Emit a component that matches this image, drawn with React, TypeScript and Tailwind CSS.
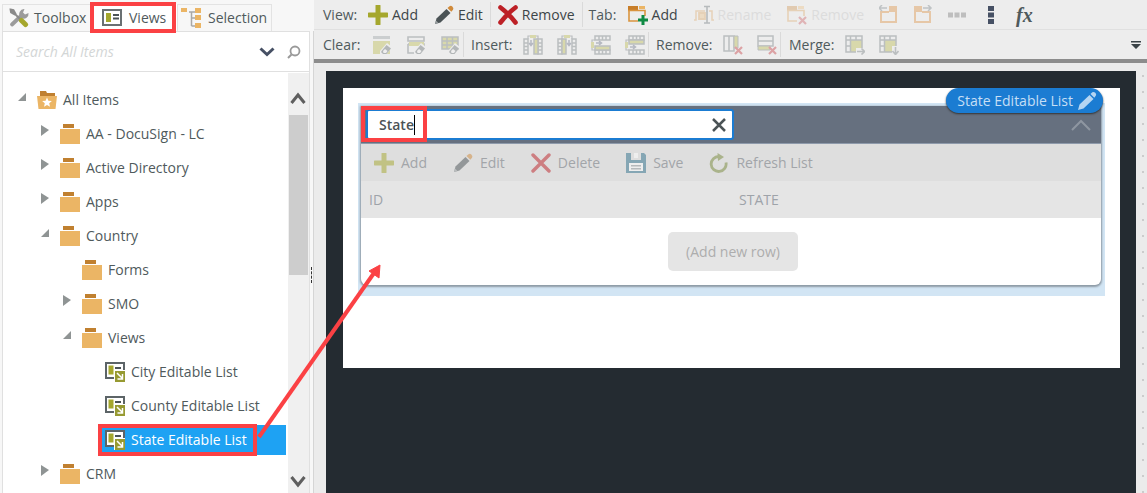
import { useState } from "react";
import type { ReactNode } from "react";
import clsx from "clsx";

function Svg({ children, size = 20 }: { children: ReactNode; size?: number }) {
  return (
    <svg width={size} height={size} viewBox="0 0 20 20" fill="none" className="shrink-0" aria-hidden="true">
      {children}
    </svg>
  );
}

/* ---------- icons ---------- */

const ToolboxIcon = () => (
  <Svg>
    <path d="M3 16.500 13 7" stroke="#9b9b9b" strokeWidth="3.800" strokeLinecap="round" />
    <path d="M11.500 9a4.800 4.800 0 0 1 4-8l-1.500 3.500 2 2 3.500-1.500a4.800 4.800 0 0 1-7 5z" fill="#9b9b9b" />
    <path d="m1.500 1.500 3 .5 2 3.500-1 1-3.500-2zM5 5l6 6" fill="#8a8a8a" stroke="#8a8a8a" strokeWidth="1.800" />
    <path d="m12.500 12.500 4 4" stroke="#a5a72d" strokeWidth="5" strokeLinecap="round" />
  </Svg>
);

const ViewsIcon = () => (
  <Svg>
    <path d="M1 2h18v15H1z" stroke="#6a7073" strokeWidth="2" fill="#fff" />
    <path d="M4 5h5v9H4z" fill="#a5a72d" />
    <path d="M11 6h6v2h-6zM11 9.500h6v2h-6z" fill="#4b5356" />
  </Svg>
);

const SelectionIcon = () => (
  <Svg>
    <path d="M10.500 4v14M8 4h6M10.500 10H14M10.500 18H14" stroke="#a8a8a8" strokeWidth="1.500" />
    <path d="M0 0h6v4H0zM14 0h6v5h-6zM14 7h6v5h-6zM14 15h6v5h-6z" fill="#ebb565" />
  </Svg>
);

const FolderIcon = () => (
  <Svg>
    <path d="M3 0h11v4H3z" fill="#c08030" />
    <path d="M0 5h20v15H0z" fill="#ebb565" />
  </Svg>
);

const RootFolderIcon = () => (
  <Svg>
    <path d="M3 1h6l1 2h8v4H3z" fill="#c08030" />
    <path d="M0 6h20l-1.500 13h-17z" fill="#ebb565" />
    <path d="m10 7.500 1.400 3.200 3.500.3-2.700 2.300.8 3.400-3-1.800-3 1.800.8-3.400L5.100 11l3.500-.3z" fill="#fff" />
  </Svg>
);

const ListViewIcon = () => (
  <Svg>
    <path d="M1 1h18v15H1z" stroke="#5c6467" strokeWidth="2" fill="#fff" />
    <path d="M3.500 3.500h5v9h-5z" fill="#a5a72d" />
    <path d="M10 5h6v2h-6z" fill="#4b5356" />
    <path d="M9 8h11v12H9z" fill="#fff" />
    <path d="M10 9h10v11H10z" fill="#979a32" />
    <path d="m12 11 5 5M17.500 12v5H12.500" stroke="#fff" strokeWidth="1.500" />
  </Svg>
);

const PlusIcon = () => (
  <Svg>
    <path d="M10 1v18M1 10h18" stroke="#a5a72d" strokeWidth="5" strokeLinecap="round" />
  </Svg>
);

const PencilIcon = () => (
  <Svg>
    <path d="m1 19 1.500-5.500L12.500 4l4 4L6.500 17.500z" fill="#4b5356" />
    <path d="m13.500 3 2-1.800q1.500-1 3 .5t.5 3L17.300 6.700z" fill="#d08a3a" />
    <path d="m1 19 1-3.500 2.500 2.500z" fill="#9aa0a2" />
  </Svg>
);

const CrossIcon = ({ thin = false }: { thin?: boolean }) => (
  <Svg>
    <path
      d={thin ? "M2 2l16 16M18 2 2 18" : "M2.500 2.500q8 6 15 15M17.500 2.500q-8 6-15 15"}
      stroke="#bd2026"
      strokeWidth={thin ? 3.4 : 4.6}
      strokeLinecap="round"
    />
  </Svg>
);

const SaveIcon = () => (
  <Svg>
    <path d="M0 0h18l2 2v18H0z" fill="#2f6f8c" />
    <path d="M5 0h10v7H5z" fill="#dedede" />
    <path d="M8 0h4v5H8z" fill="#fff" />
    <path d="M3 10h14v8H3z" fill="#fff" />
    <path d="M5 12h10v1.500H5zM5 15h10v1.500H5z" fill="#8d9599" />
  </Svg>
);

const RefreshIcon = () => (
  <Svg>
    <path d="M17 9.500a7.500 7.500 0 1 1-7-6" stroke="#77893a" strokeWidth="2.800" />
    <path d="m8.500 0 6.500 4-6 4z" fill="#77893a" />
  </Svg>
);

const TabBase = () => (
  <>
    <path d="M0 1h10v5H0z" fill="#c77d28" />
    <path d="M11 1h6v3h-6z" fill="#ebb565" />
    <path d="M1 5v11h9M0 5.500h17V11" stroke="#d9943f" strokeWidth="1.600" />
  </>
);

const TabAddIcon = () => (
  <Svg>
    <TabBase />
    <path d="M15 10v10M10 15h10" stroke="#0f8a43" strokeWidth="3" />
  </Svg>
);

const TabRemoveIcon = () => (
  <Svg>
    <TabBase />
    <path d="m12 12 7 7M19 12l-7 7" stroke="#c5343a" strokeWidth="2.200" />
  </Svg>
);

const RenameIcon = () => (
  <Svg>
    <path d="M0 15h2V6h9M15 6h3v9h2" stroke="#d9943f" strokeWidth="1.500" />
    <path d="M5 8h6v6H5z" stroke="#d9943f" strokeWidth="1.800" fill="#ebb565" />
    <path d="M10 1.500h6M13 1.500v16M10 18h6" stroke="#3e4a50" strokeWidth="1.600" />
  </Svg>
);

const TabMoveIcon = ({ flip = false }: { flip?: boolean }) => (
  <Svg>
    <path d={flip ? "M1 1h8v6H1z" : "M10 1h8v6h-8z"} fill="#dd8f40" />
    <path d={flip ? "M9 7h8v10H2V7" : "M10 7H2v10h15V7"} stroke="#dd8f40" strokeWidth="2" />
    <path d={flip ? "M10 3h8M15 0l3 3-3 3" : "M8 3H0M3 0 0 3l3 3"} stroke="#7c858a" strokeWidth="1.500" />
  </Svg>
);

const Eraser = () => (
  <>
    <path d="m8 16 7-8 5 4-6 8H8z" fill="#ededed" />
    <path d="m10 15.500 4.500-5.500 4.500 3.500-4.500 5.500h-3.500L9 17z" fill="#5f676b" />
    <path d="m11 16 2-2 2.500 2-1.500 2h-2.500z" fill="#f4f4f4" />
  </>
);

const ClearViewIcon = () => (
  <Svg>
    <path d="M1 1h17v3H1z" fill="#9aa0a3" />
    <path d="M1 6h17v13H1z" fill="#b9bb49" />
    <Eraser />
  </Svg>
);

const ClearSectionIcon = () => (
  <Svg>
    <path d="M2 2h16v4H2zM2 9v9h8M2 9h16v3" stroke="#737b7f" strokeWidth="1.600" />
    <path d="M3 7h15v4H3z" fill="#b9bb49" />
    <Eraser />
  </Svg>
);

const ClearCellIcon = () => (
  <Svg>
    <path d="M2 2h16v12H2z" fill="#b9bb49" />
    <path d="M2 2h16v12H2zM2 6h16M2 10h16M7 2v12M12.500 2v12" stroke="#737b7f" strokeWidth="1.500" />
    <Eraser />
  </Svg>
);

// Two film-strip columns with the new, highlighted one between them
const InsertIcon = ({ transform }: { transform?: string }) => (
  <Svg>
    <g transform={transform}>
      <path d="M1 4h4v15H1zM1 8h4M1 11.500h4M1 15h4M15 4h4v15h-4zM15 8h4M15 11.500h4M15 15h4" stroke="#737b7f" strokeWidth="1.500" />
      <path d="M11 4h4v15h-4z" fill="#b9bb49" stroke="#737b7f" strokeWidth="1.500" />
      <path d="M5 4V1h10v3" stroke="#737b7f" strokeWidth="1.200" />
      <path d="M7 0h6v3H7z" fill="#b9bb49" />
      <path d="M8 5v5M6 8l2 2.500L10 8" stroke="#626b80" strokeWidth="1.500" />
    </g>
  </Svg>
);

const RemoveColumnIcon = () => (
  <Svg>
    <path d="M1 1h5v15H1zM6 1h5v15H6z" stroke="#737b7f" strokeWidth="1.500" />
    <path d="M11 1h4v12h-4z" fill="#b9bb49" stroke="#737b7f" strokeWidth="1" />
    <path d="m12 12 7 7M19 12l-7 7" stroke="#c5343a" strokeWidth="2.200" />
  </Svg>
);

const RemoveRowIcon = () => (
  <Svg>
    <path d="M1 1h15v5H1zM1 6h15v5H1z" stroke="#737b7f" strokeWidth="1.500" />
    <path d="M1 11h12v4H1z" fill="#b9bb49" stroke="#737b7f" strokeWidth="1" />
    <path d="m12 12 7 7M19 12l-7 7" stroke="#c5343a" strokeWidth="2.200" />
  </Svg>
);

const MergeIcon = ({ down = false }: { down?: boolean }) => (
  <Svg>
    <path d="M6 5h11v12H6z" fill="#b9bb49" />
    <path d="M1 1h16v16H1zM5.500 1v16M1 5h16M11 1v4M1 11h4" stroke="#737b7f" strokeWidth="1.500" />
    <path d={down ? "M13 11h7v9h-7z" : "M11 13h9v7h-9z"} fill="#ededed" />
    <path
      d={down ? "M16.500 12v7M13.500 16l3 3.500 3-3.500" : "M12 16.500h7M16.500 13.500l3 3-3 3"}
      stroke="#737b7f"
      strokeWidth="1.600"
    />
  </Svg>
);

const DotsIcon = ({ vertical = false }: { vertical?: boolean }) =>
  vertical ? (
    <Svg>
      <path d="M7 1h6v5H7zM7 7.500h6v5H7zM7 14h6v5H7z" fill="#465064" />
    </Svg>
  ) : (
    <Svg>
      <path d="M1 7.500h5v5H1zM7.500 7.500h5v5h-5zM14 7.500h5v5h-5z" fill="#7a7a7a" />
    </Svg>
  );

/* ---------- left panel ---------- */

interface TreeNode {
  label: string;
  level: 0 | 1 | 2 | 3;
  state?: "open" | "closed";
}

const nodes: TreeNode[] = [
  { label: "All Items", level: 0, state: "open" },
  { label: "AA - DocuSign - LC", level: 1, state: "closed" },
  { label: "Active Directory", level: 1, state: "closed" },
  { label: "Apps", level: 1, state: "closed" },
  { label: "Country", level: 1, state: "open" },
  { label: "Forms", level: 2 },
  { label: "SMO", level: 2, state: "closed" },
  { label: "Views", level: 2, state: "open" },
  { label: "City Editable List", level: 3 },
  { label: "County Editable List", level: 3 },
  { label: "State Editable List", level: 3 },
  { label: "CRM", level: 1, state: "closed" },
];

const indent = ["pl-[15px]", "pl-[38px]", "pl-[60px]", "pl-[83px]"];

function TreeRow({ node, selected, onSelect }: { node: TreeNode; selected: boolean; onSelect: () => void }) {
  return (
    <li role="treeitem" aria-selected={selected} className={clsx("flex h-[34px] shrink-0 items-center", indent[node.level])}>
      <span className="flex w-[15px] shrink-0 pb-2">
        {node.state && (
          <svg width="9" height="11" viewBox="0 0 9 11" fill="#8f9494" aria-hidden="true">
            <path d={node.state === "open" ? "M8 2v8H0z" : "M0 0l8 5-8 6z"} />
          </svg>
        )}
      </span>
      <button
        type="button"
        onClick={onSelect}
        className={clsx(
          "relative flex h-[30px] flex-1 items-center gap-1.5 pl-1 text-left whitespace-nowrap",
          selected && "bg-[#1ea2f3] text-white"
        )}
      >
        {node.level === 0 ? <RootFolderIcon /> : node.level === 3 ? <ListViewIcon /> : <FolderIcon />}
        {node.label}
        {selected && <span className="absolute -inset-y-px -left-[3px] w-[159px] border-4 border-[#fb4144]" />}
      </button>
    </li>
  );
}

function Sidebar() {
  const [selected, setSelected] = useState("State Editable List");

  return (
    <aside className="flex w-[314px] shrink-0 flex-col bg-[#f7f7f7] pl-[2px]">
      <div role="tablist" className="flex h-[31px] shrink-0 items-end pt-1">
        <button type="button" role="tab" className="flex h-full w-[90px] items-center gap-[5px] border border-b-0 border-[#e3e3e3] pl-1.5">
          <ToolboxIcon />
          Toolbox
        </button>
        <button type="button" role="tab" aria-selected="true" className="relative flex h-full w-[85px] items-center gap-[7px] bg-white pl-[10px]">
          <ViewsIcon />
          Views
          <span className="absolute -top-0.5 -bottom-0.5 -left-0.5 w-[86px] border-4 border-[#fb4144]" />
        </button>
        <button type="button" role="tab" className="flex h-full w-[95px] items-center gap-[7px] border border-b-0 border-[#e3e3e3] pl-[3px]">
          <SelectionIcon />
          Selection
        </button>
      </div>

      <div className="flex min-h-0 flex-1">
        <div className="flex min-w-0 flex-1 flex-col border border-b-0 border-[#e0e0e0] bg-white">
          <div className="flex h-[40px] shrink-0 items-center border-b border-[#e0e0e0] pr-2">
            <input
              type="search"
              aria-label="Search All Items"
              placeholder="Search All Items"
              className="min-w-0 flex-1 pl-[13px] italic outline-none placeholder:text-[#d3d6d6]"
            />
            <button type="button" aria-label="Search options" className="mr-3">
              <svg width="16" height="10" viewBox="0 0 16 10" fill="none">
                <path d="m1.500 1.500 6.500 6 6.500-6" stroke="#465064" strokeWidth="3" />
              </svg>
            </button>
            <button type="button" aria-label="Search">
              <svg width="14" height="14" viewBox="0 0 14 14" fill="none" stroke="#999">
                <circle cx="8" cy="6" r="4.500" strokeWidth="1.800" />
                <path d="M4.500 9.500 1 13" strokeWidth="2" />
              </svg>
            </button>
          </div>

          <div className="flex min-h-0 flex-1 pt-px">
            <ul role="tree" className="mr-[2px] flex flex-1 flex-col overflow-hidden pt-[10px]">
              {nodes.map((node) => (
                <TreeRow
                  key={node.label}
                  node={node}
                  selected={node.label === selected}
                  onSelect={() => setSelected(node.label)}
                />
              ))}
            </ul>
            <div className="flex w-[21px] flex-col items-center bg-[#f0f0f0] pr-px pb-1">
              <svg width="16" height="42" viewBox="0 0 16 42" fill="none" className="shrink-0">
                <path d="m1.500 30 6.500-8 6.500 8" stroke="#5f5f5f" strokeWidth="3" />
              </svg>
              <div className="h-[160px] w-[19px] shrink-0 bg-[#cdcdcd]" />
              <svg width="16" height="14" viewBox="0 0 16 14" fill="none" className="mt-auto shrink-0">
                <path d="m1.500 2 6.500 8 6.500-8" stroke="#5f5f5f" strokeWidth="3" />
              </svg>
            </div>
          </div>
        </div>
        <div className="flex w-1 items-center border-r border-[#d5d5d5] pt-[26px] pl-px">
          <span className="h-4 border-l border-dashed border-[#333]" />
        </div>
      </div>
    </aside>
  );
}

/* ---------- ribbon ---------- */

interface ToolProps {
  icon: ReactNode;
  label: string;
  disabled?: boolean;
}

function TextTool({ icon, label, disabled }: ToolProps) {
  return (
    <button
      type="button"
      disabled={disabled}
      className={clsx("flex h-full items-center gap-1 px-2", disabled ? "text-[#dcdcdc]" : "text-[#3d4548]")}
    >
      <span className={clsx(disabled && "opacity-30")}>{icon}</span>
      {label}
    </button>
  );
}

function IconTool({ icon, label, disabled }: ToolProps) {
  return (
    <button type="button" aria-label={label} disabled={disabled} className={clsx("w-[34px] pl-[7px]", disabled && "opacity-40")}>
      {icon}
    </button>
  );
}

const Divider = ({ className }: { className: string }) => <span className={clsx("h-[25px] w-px bg-[#dadada]", className)} />;

function Ribbon() {
  return (
    <header className="shrink-0 border-b-4 border-[#8c8c8c] bg-[#ededed] text-[#4f5a5c]">
      <div className="flex h-[30px] items-center border-b border-[#e0e0e0] pl-[9px]">
        <span className="w-[37px]">View:</span>
        <TextTool icon={<PlusIcon />} label="Add" />
        <TextTool icon={<PencilIcon />} label="Edit" />
        <Divider className="-mx-px" />
        <TextTool icon={<CrossIcon />} label="Remove" />
        <Divider className="-mx-px" />
        <span className="w-[38px] pl-[7px]">Tab:</span>
        <TextTool icon={<TabAddIcon />} label="Add" />
        <TextTool icon={<RenameIcon />} label="Rename" disabled />
        <TextTool icon={<TabRemoveIcon />} label="Remove" disabled />
        <IconTool icon={<TabMoveIcon />} label="Move tab left" disabled />
        <IconTool icon={<TabMoveIcon flip />} label="Move tab right" disabled />
        <IconTool icon={<DotsIcon />} label="Horizontal tabs" disabled />
        <IconTool icon={<DotsIcon vertical />} label="Vertical tabs" />
        <button type="button" aria-label="Expression" className="pl-2 font-['Liberation_Serif',serif] text-xl font-bold italic">
          fx
        </button>
      </div>
      <div className="flex h-[29px] items-center pl-[9px]">
        <span className="w-[42px]">Clear:</span>
        <IconTool icon={<ClearViewIcon />} label="Clear view" disabled />
        <IconTool icon={<ClearSectionIcon />} label="Clear section" disabled />
        <IconTool icon={<ClearCellIcon />} label="Clear cell" disabled />
        <Divider className="-ml-1" />
        <span className="w-[52px] pl-[7px]">Insert:</span>
        <IconTool icon={<InsertIcon />} label="Insert column right" disabled />
        <IconTool icon={<InsertIcon transform="matrix(-1 0 0 1 20 0)" />} label="Insert column left" disabled />
        <IconTool icon={<InsertIcon transform="matrix(0 1 1 0 0 0)" />} label="Insert row below" disabled />
        <IconTool icon={<InsertIcon transform="matrix(0 -1 1 0 0 20)" />} label="Insert row above" disabled />
        <Divider className="-ml-1" />
        <span className="w-[67px] pl-[7px]">Remove:</span>
        <IconTool icon={<RemoveColumnIcon />} label="Remove column" disabled />
        <IconTool icon={<RemoveRowIcon />} label="Remove row" disabled />
        <Divider className="-ml-1" />
        <span className="w-[57px] pl-2">Merge:</span>
        <IconTool icon={<MergeIcon />} label="Merge right" disabled />
        <IconTool icon={<MergeIcon down />} label="Merge down" disabled />
        <button type="button" aria-label="More tools" className="mr-1.5 ml-auto">
          <svg width="10" height="8" viewBox="0 0 10 8" fill="#3a4247">
            <path d="M0 0h10v1.500H0zM0 3h10L5 8z" />
          </svg>
        </button>
      </div>
    </header>
  );
}

/* ---------- canvas ---------- */

function ViewTool({ icon, label }: { icon: ReactNode; label: string }) {
  return (
    <button type="button" disabled className="flex items-center gap-[7px]">
      <span className="opacity-50">{icon}</span>
      {label}
    </button>
  );
}

function ListView() {
  const [title, setTitle] = useState("State");

  return (
    <section className="relative bg-[#d2e5f4] pt-[3px] pr-1 pb-[11px] pl-[3px]">
      <div className="overflow-hidden rounded-b-md bg-white shadow-[0_1px_2px_1px_#8d9aa5]">
        <div className="flex h-[38px] items-center justify-between border-b border-[#8e9aab] bg-[#66707f] pr-[10px] pl-[5px]">
          <div className="relative flex h-[31px] w-[368px] items-center rounded-[3px] border-2 border-[#1b7cd2] bg-white">
            <input
              aria-label="View title"
              value={title}
              onChange={(e) => setTitle(e.target.value)}
              className="min-w-0 flex-1 pl-[11px] font-semibold text-[#4b5356] outline-none"
            />
            <span className="absolute top-1 left-[46px] h-5 w-px bg-black" />
            <button type="button" aria-label="Clear title" onClick={() => setTitle("")} className="mr-1.5">
              <svg width="14" height="14" viewBox="0 0 14 14">
                <path d="m1 1 12 12M13 1 1 13" stroke="#4b5356" strokeWidth="2.500" />
              </svg>
            </button>
            <span className="pointer-events-none absolute -top-[5px] -left-[7px] h-9 w-[66px] border-4 border-[#fb4144]" />
          </div>
          <svg width="20" height="12" viewBox="0 0 20 12" fill="none">
            <path d="m1 11 9-9 9 9" stroke="#8e96a1" strokeWidth="2" />
          </svg>
        </div>

        <div className="flex h-[37px] items-center gap-[26px] bg-[#dedede] pl-[13px] text-[#a2a5a9]">
          <ViewTool icon={<PlusIcon />} label="Add" />
          <ViewTool icon={<PencilIcon />} label="Edit" />
          <ViewTool icon={<CrossIcon thin />} label="Delete" />
          <ViewTool icon={<SaveIcon />} label="Save" />
          <ViewTool icon={<RefreshIcon />} label="Refresh List" />
        </div>

        <table className="w-full table-fixed">
          <thead>
            <tr className="h-[37px] bg-[#e5e5e5] text-left text-[#9ea3a9]">
              <th className="px-2 font-normal">ID</th>
              <th className="px-2 font-normal">STATE</th>
            </tr>
          </thead>
          <tbody>
            <tr>
              <td colSpan={2} className="h-[67px] pl-1 text-center">
                <button type="button" className="h-[39px] rounded-[5px] bg-[#e5e5e5] px-[18px] text-[#adadad]">
                  (Add new row)
                </button>
              </td>
            </tr>
          </tbody>
        </table>
      </div>

      <button
        type="button"
        className="absolute -top-[15px] right-0.5 flex h-[25px] items-center gap-1 rounded-full bg-[#1b7cd2] pr-1.5 pl-[11px] text-[#c6dff5] shadow-[0_1px_2px_#333]"
      >
        State Editable List
        <svg width="20" height="20" viewBox="0 0 20 20" fill="#b5d5f2">
          <path d="m1 19 1.500-5.500L12.500 4l4 4L6.500 17.500zM13.500 3l1.800-1.700q1.500-1 3 .5t.5 3L17.300 6.700z" />
        </svg>
      </button>
    </section>
  );
}

export default function App() {
  return (
    <div className="relative flex h-screen min-w-[900px] overflow-hidden bg-[#ebebeb] font-['Open_Sans','Noto_Sans',sans-serif] text-sm text-[#4f5a5c]">
      <Sidebar />
      <div className="flex min-w-0 flex-1 flex-col">
        <Ribbon />
        <main className="flex-1 bg-[radial-gradient(circle_at_center,#cccccc_1px,transparent_1px)] bg-[size:16px_16px] bg-[position:right_-4px_top_5px] pt-2 pr-[11px] pl-3">
          <div className="h-full bg-[#242b31] pt-[17px] pr-4 pl-[17px]">
            <div className="h-[280px] bg-white px-[15px] pt-[15px]">
              <ListView />
            </div>
          </div>
        </main>
      </div>

      <svg width="400" height="493" viewBox="0 0 400 493" className="pointer-events-none absolute top-0 left-0" aria-hidden="true">
        <path d="M259 437 374 273" stroke="#fb4144" strokeWidth="4" />
        <path d="m380 265-11 6 10 7z" fill="#fb4144" stroke="#fb4144" />
      </svg>
    </div>
  );
}
